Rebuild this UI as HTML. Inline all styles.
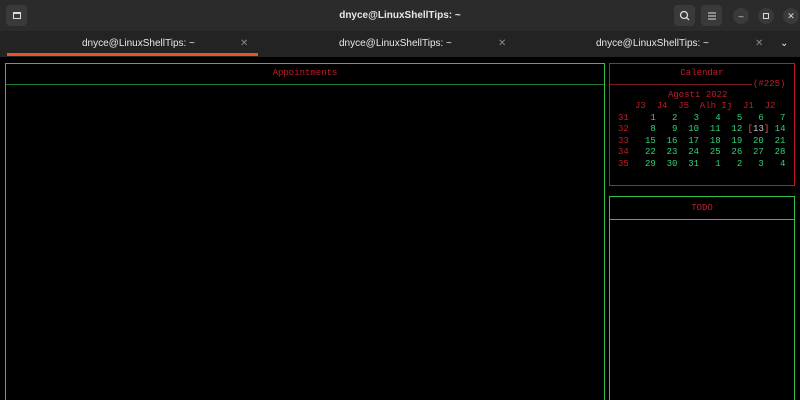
<!DOCTYPE html>
<html><head><meta charset="utf-8"><style>
*{margin:0;padding:0;box-sizing:border-box}
html,body{width:800px;height:400px;overflow:hidden}
body{background:#000;position:relative;font-family:"Liberation Sans",sans-serif}
.hb{position:absolute;left:0;top:0;width:800px;height:31px;background:#2b2b2b}
.tb{position:absolute;left:0;top:31px;width:800px;height:26px;background:#232323}
.t{position:absolute;color:#e8e8e8;font-size:10px}
.btn{position:absolute;width:21px;height:21px;border-radius:4px;background:#3a3a3a}
.cb{position:absolute;width:16px;height:16px;border-radius:50%;background:#3a3a3a;color:#ddd;font-size:9px;text-align:center;line-height:16px}
.box{position:absolute}
.m{position:absolute;font-family:"Liberation Mono",monospace;font-size:9px;line-height:11.4px;white-space:pre}
.r{color:#c01c28}.g{color:#33d17a}
</style></head><body>
<div class="hb"></div>
<div class="btn" style="left:6px;top:5px;"></div>
<div style="position:absolute;left:13px;top:12px;width:8px;height:7px;border:1px solid #ddd;border-top-width:2px"></div>
<div class="t" style="left:0;width:800px;top:10px;text-align:center;font-weight:bold;font-size:10px">dnyce@LinuxShellTips: ~</div>
<div class="btn" style="left:674px;top:5px"></div>
<svg style="position:absolute;left:679px;top:10px" width="12" height="12"><circle cx="5" cy="5" r="3.5" stroke="#ddd" stroke-width="1.3" fill="none"/><line x1="7.5" y1="7.5" x2="10" y2="10" stroke="#ddd" stroke-width="1.3"/></svg>
<div class="btn" style="left:701px;top:5px"></div>
<svg style="position:absolute;left:706px;top:10px" width="12" height="12"><path d="M2 3h8M2 6h8M2 9h8" stroke="#ddd" stroke-width="1.1"/></svg>
<div class="cb" style="left:733px;top:8px">–</div>
<div class="cb" style="left:758px;top:8px"></div>
<div style="position:absolute;left:763px;top:13px;width:6px;height:6px;border:1.5px solid #ddd"></div>
<div class="cb" style="left:783px;top:8px">✕</div>
<div class="tb"></div>
<div class="t" style="left:82px;top:38px">dnyce@LinuxShellTips: ~</div>
<div class="t" style="left:240px;top:38px;color:#888">✕</div>
<div style="position:absolute;left:7px;top:53px;width:251px;height:3px;background:#e95420"></div>
<div class="t" style="left:339px;top:38px">dnyce@LinuxShellTips: ~</div>
<div class="t" style="left:498px;top:38px;color:#888">✕</div>
<div class="t" style="left:596px;top:38px">dnyce@LinuxShellTips: ~</div>
<div class="t" style="left:755px;top:38px;color:#888">✕</div>
<div class="t" style="left:780px;top:38px">⌄</div>

<div class="box" style="left:5px;top:63px;width:600px;height:340px;border:1px solid #33c24d"></div>
<div class="box" style="left:6px;top:84px;width:598px;height:1px;background:#1d7a2d"></div>
<div class="m r" style="left:5px;width:600px;top:68px;text-align:center">Appointments</div>

<div class="box" style="left:609px;top:63px;width:186px;height:123px;border:1px solid #c01c28"></div>
<div class="box" style="left:610px;top:84px;width:142px;height:1px;background:#7a1a22"></div>
<div class="m r" style="left:609px;width:186px;top:68px;text-align:center">Calendar</div>
<div class="m r" style="left:753px;top:79px">(#225)</div>
<div class="m r" style="left:668px;top:90px">Agosti 2022</div>
<div class="m r" style="left:635px;top:101px">J3  J4  J5  Alh Ij  J1  J2</div>
<div class="m" style="left:618px;top:113px"><span class="r">31</span><span class="g">    1   2   3   4   5   6   7</span>
<span class="r">32</span><span class="g">    8   9  10  11  12</span> <span style="color:#e6605e">[</span><span style="color:#c8c8c8">13</span><span style="color:#e6605e">]</span> <span class="g">14</span>
<span class="r">33</span><span class="g">   15  16  17  18  19  20  21</span>
<span class="r">34</span><span class="g">   22  23  24  25  26  27  28</span>
<span class="r">35</span><span class="g">   29  30  31   1   2   3   4</span></div>

<div class="box" style="left:609px;top:196px;width:186px;height:220px;border:1px solid #33c24d"></div>
<div class="box" style="left:610px;top:219px;width:184px;height:1px;background:#33c24d"></div>
<div class="m r" style="left:609px;width:186px;top:203px;text-align:center">TODO</div>
</body></html>
